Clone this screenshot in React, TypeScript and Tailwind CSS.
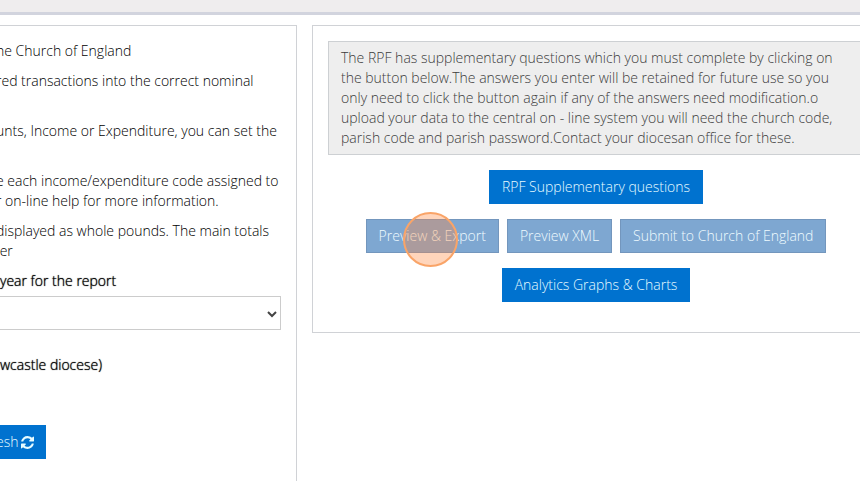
import React from 'react';

const buttonBase = 'h-[34px] border px-3 text-sm font-light whitespace-nowrap';
const strongText = 'font-light text-black [text-shadow:0_0_1px_#000]';

const RefreshIcon: React.FC = () => (
  <svg viewBox="0 0 1536 1536" className="size-[13px]" fill="currentColor" aria-hidden="true">
    <path d="M1511 928q0 5-1 7-64 268-268 434.5T764 1536q-146 0-282.5-55T238 1324l-129 129q-19 19-45 19t-45-19-19-45V960q0-26 19-45t45-19h448q26 0 45 19t19 45-19 45l-137 137q71 66 161 102t187 36q134 0 250-65t186-179q11-17 53-117 8-23 30-23h192q13 0 22.5 9.5t9.5 22.5zm25-800v448q0 26-19 45t-45 19h-448q-26 0-45-19t-19-45 19-45l138-138Q969 256 768 256q-134 0-250 65T332 500q-11 17-53 117-8 23-30 23H50q-13 0-22.5-9.5T18 608v-7q65-268 270-434.5T768 0q146 0 284 55.5T1297 212l130-129q19-19 45-19t45 19 19 45z" />
  </svg>
);

const ActionButton: React.FC<{ label: string; disabled?: boolean; children?: React.ReactNode }> = ({ label, disabled, children }) => (
  <button
    type="button"
    disabled={disabled}
    className={`relative ${buttonBase} ${disabled ? 'border-[#7396bd] bg-[#7ea7d1] text-[#effbff]' : 'border-[#0072cf] bg-[#0072cf] text-[#e6fbff]'}`}
  >
    {label}
    {children}
  </button>
);

const NOTES = [
  ['he Church of England'],
  ['red transactions into the correct nominal', ''],
  ['unts, Income or Expenditure, you can set the', ''],
  ['e each income/expenditure code assigned to', 'r on-line help for more information.'],
  ['displayed as whole pounds. The main totals', '\u00a0er'],
];

export default function App() {
  return (
    <div className="min-h-screen overflow-hidden bg-white font-['Open_Sans','Noto_Sans',sans-serif] text-sm font-light text-black">
      <header className="h-[15px] border-b-[3px] border-[#d2d4de] bg-[#efedee]" />

      <main className="-mr-5 grid grid-cols-[297fr_568fr] gap-[15px] pt-[10px]">
        {/* Report settings */}
        <section className="min-h-[calc(100vh-25px)] border-t border-r border-[#d0d2d6] pt-[15px] pr-[15px]">
          <div className="-ml-1 space-y-[10px]">
            {NOTES.map((lines, i) => (
              <p key={i}>
                {lines.map((line, j) => (
                  <span key={j} className="block h-5 whitespace-nowrap">{line}</span>
                ))}
              </p>
            ))}
          </div>
          <label htmlFor="year" className={`mt-[10px] mb-[5px] block ${strongText}`}>
            year for the report
          </label>
          <div className="relative">
            <select id="year" className="block h-[34px] w-full appearance-none border border-l-0 border-[#cccccc] bg-white" />
            <svg viewBox="0 0 10 7" className="pointer-events-none absolute top-[15px] right-1 h-[7px] w-[10px]" fill="none" stroke="#444" strokeWidth="2">
              <path d="M1 1l4 4 4-4" />
            </svg>
          </div>
          <p className={`mt-[25px] ${strongText}`}>wcastle diocese)</p>
          <button type="button" className="mt-[50px] -ml-1 flex h-[34px] items-center gap-[3px] bg-[#0072cf] pr-3 text-sm font-light text-[#e6fbff]">
            esh
            <RefreshIcon />
          </button>
        </section>

        {/* Export actions */}
        <section className="self-start border border-[#d0d2d6] p-[15px] pb-[30px]">
          <p className="border border-[#cdd0d3] bg-[#eeeeee] px-3 py-[6px] text-[#3c3c3c]">
            The RPF has supplementary questions which you must complete by clicking on the button below.The answers you
            enter will be retained for future use so you only need to click the button again if any of the answers need
            modification.o upload your data to the central on - line system you will need the church code, parish code
            and parish password.Contact your diocesan office for these.
          </p>
          <div className="mt-[15px] flex flex-col items-center gap-[15px]">
            <ActionButton label="RPF Supplementary questions" />
            <div className="flex gap-2">
              <ActionButton label="Preview & Export" disabled>
                <span className="absolute -top-2 left-9 size-[55px] rounded-full border-2 border-[#f9a468] bg-[#ff863b]/35" />
              </ActionButton>
              <ActionButton label="Preview XML" disabled />
              <ActionButton label="Submit to Church of England" disabled />
            </div>
            <ActionButton label="Analytics Graphs & Charts" />
          </div>
        </section>
      </main>
    </div>
  );
}
